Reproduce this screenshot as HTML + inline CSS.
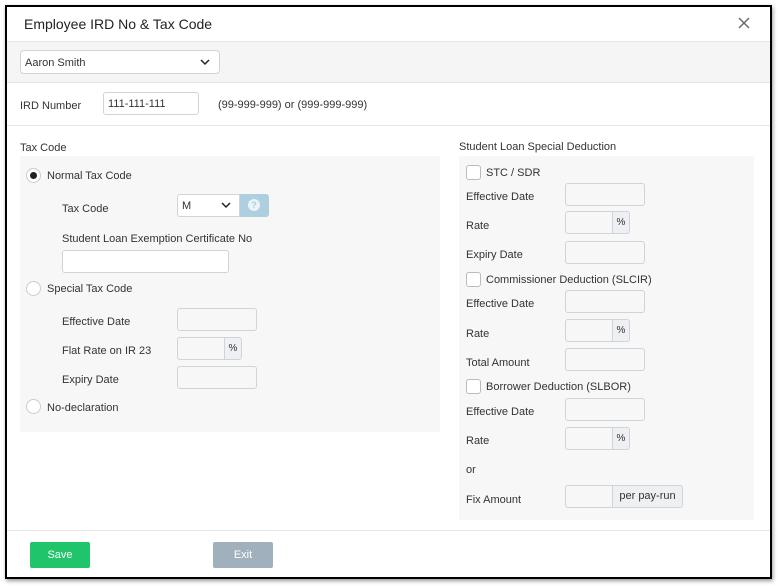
<!DOCTYPE html>
<html><head><style>
*{box-sizing:border-box;margin:0;padding:0}
body{width:778px;height:587px;background:#fff;font-family:"Liberation Sans",sans-serif;color:#333;position:relative;overflow:hidden;font-size:11px}
.a{position:absolute}
.t{position:absolute;margin-top:1px}
.box{position:absolute;border:1px solid #cfd4da;border-radius:3px;background:#f7f7f7}
.wbox{position:absolute;border:1px solid #cfd4da;border-radius:3px;background:#fff}
.add{position:absolute;border:1px solid #cfd4da;background:#eef0f3;border-radius:0 3px 3px 0;font-size:10px;text-align:center;line-height:21px;color:#333}
.cb{position:absolute;width:15px;height:15px;border:1px solid #bbb;border-radius:3px;background:#fff}
.rd{position:absolute;width:15px;height:15px;border:1px solid #ccc;border-radius:50%;background:#fff}
</style></head><body>
<div class="a" style="left:5px;top:5px;width:767px;height:574px;border:2px solid #000;box-shadow:1px 2px 4px rgba(0,0,0,.4)"></div>
<div class="t" style="left:24px;top:15px;font-size:14px;color:#222">Employee IRD No &amp; Tax Code</div>
<svg class="a" style="left:738px;top:17px" width="12" height="12"><path d="M1 1l10 10M11 1L1 11" stroke="#666" stroke-width="1.4"/></svg>
<div class="a" style="left:7px;top:41px;width:763px;height:42px;background:#f5f5f5;border-top:1px solid #e6e6e6;border-bottom:1px solid #e6e6e6"></div>
<div class="wbox" style="left:20px;top:50px;width:200px;height:24px;border-radius:4px"></div>
<div class="t" style="left:25px;top:56px">Aaron Smith</div>
<svg class="a" style="left:200px;top:59px" width="10" height="7"><path d="M1 1l4 4 4-4" stroke="#222" stroke-width="1.5" fill="none"/></svg>
<div class="t" style="left:20px;top:99px">IRD Number</div>
<div class="wbox" style="left:103px;top:92px;width:96px;height:23px"></div>
<div class="t" style="left:108px;top:97px">111-111-111</div>
<div class="t" style="left:218px;top:98px">(99-999-999) or (999-999-999)</div>
<div class="a" style="left:7px;top:125px;width:763px;border-top:1px solid #e6e6e6"></div>
<div class="t" style="left:20px;top:141px">Tax Code</div>
<div class="a" style="left:20px;top:156px;width:420px;height:276px;background:#f7f7f7"></div>
<div class="rd" style="left:26px;top:168px"></div><div class="a" style="left:30px;top:172px;width:7px;height:7px;border-radius:50%;background:#222"></div>
<div class="t" style="left:47px;top:169px">Normal Tax Code</div>
<div class="t" style="left:62px;top:202px">Tax Code</div>
<div class="wbox" style="left:177px;top:194px;width:63px;height:23px;border-radius:3px 0 0 3px"></div>
<div class="t" style="left:182px;top:199px">M</div>
<svg class="a" style="left:221px;top:202px" width="10" height="7"><path d="M1 1l4 4 4-4" stroke="#222" stroke-width="1.5" fill="none"/></svg>
<div class="a" style="left:240px;top:194px;width:29px;height:23px;background:#aecfe0;border-radius:0 3px 3px 0"></div>
<div class="a" style="left:248px;top:199px;width:12px;height:12px;border-radius:50%;background:#eaf3f8;color:#aecfe0;font-size:9px;font-weight:bold;text-align:center;line-height:12px">?</div>
<div class="t" style="left:62px;top:232px">Student Loan Exemption Certificate No</div>
<div class="wbox" style="left:62px;top:250px;width:167px;height:23px"></div>
<div class="rd" style="left:26px;top:281px"></div>
<div class="t" style="left:47px;top:282px">Special Tax Code</div>
<div class="t" style="left:62px;top:315px">Effective Date</div>
<div class="box" style="left:177px;top:308px;width:80px;height:23px"></div>
<div class="t" style="left:62px;top:344px">Flat Rate on IR 23</div>
<div class="box" style="left:177px;top:337px;width:48px;height:23px;border-radius:3px 0 0 3px"></div>
<div class="add" style="left:224px;top:337px;width:18px;height:23px">%</div>
<div class="t" style="left:62px;top:373px">Expiry Date</div>
<div class="box" style="left:177px;top:366px;width:80px;height:23px"></div>
<div class="rd" style="left:26px;top:399px"></div>
<div class="t" style="left:47px;top:401px">No-declaration</div>

<div class="t" style="left:459px;top:140px">Student Loan Special Deduction</div>
<div class="a" style="left:459px;top:156px;width:295px;height:364px;background:#f7f7f7"></div>
<div class="cb" style="left:466px;top:165px"></div><div class="t" style="left:486px;top:166px">STC / SDR</div>
<div class="t" style="left:466px;top:190px">Effective Date</div><div class="box" style="left:565px;top:183px;width:80px;height:23px"></div>
<div class="t" style="left:466px;top:219px">Rate</div><div class="box" style="left:565px;top:211px;width:48px;height:23px;border-radius:3px 0 0 3px"></div><div class="add" style="left:612px;top:211px;width:18px;height:23px">%</div>
<div class="t" style="left:466px;top:248px">Expiry Date</div><div class="box" style="left:565px;top:241px;width:80px;height:23px"></div>
<div class="cb" style="left:466px;top:272px"></div><div class="t" style="left:486px;top:273px">Commissioner Deduction (SLCIR)</div>
<div class="t" style="left:466px;top:297px">Effective Date</div><div class="box" style="left:565px;top:290px;width:80px;height:23px"></div>
<div class="t" style="left:466px;top:327px">Rate</div><div class="box" style="left:565px;top:319px;width:48px;height:23px;border-radius:3px 0 0 3px"></div><div class="add" style="left:612px;top:319px;width:18px;height:23px">%</div>
<div class="t" style="left:466px;top:356px">Total Amount</div><div class="box" style="left:565px;top:348px;width:80px;height:23px"></div>
<div class="cb" style="left:466px;top:379px"></div><div class="t" style="left:486px;top:380px">Borrower Deduction (SLBOR)</div>
<div class="t" style="left:466px;top:405px">Effective Date</div><div class="box" style="left:565px;top:398px;width:80px;height:23px"></div>
<div class="t" style="left:466px;top:434px">Rate</div><div class="box" style="left:565px;top:427px;width:48px;height:23px;border-radius:3px 0 0 3px"></div><div class="add" style="left:612px;top:427px;width:18px;height:23px">%</div>
<div class="t" style="left:466px;top:463px">or</div>
<div class="t" style="left:466px;top:493px">Fix Amount</div><div class="box" style="left:565px;top:485px;width:48px;height:23px;border-radius:3px 0 0 3px"></div><div class="add" style="left:612px;top:485px;width:71px;height:23px;font-size:11px">per pay-run</div>

<div class="a" style="left:7px;top:530px;width:763px;border-top:1px solid #e6e6e6"></div>
<div class="a" style="left:30px;top:542px;width:60px;height:26px;background:#1fc46b;border-radius:2px;color:#fff;text-align:center;line-height:27px">Save</div>
<div class="a" style="left:213px;top:542px;width:60px;height:26px;background:#a0b1bd;border-radius:2px;color:#fff;text-align:center;line-height:27px">Exit</div>
</body></html>
